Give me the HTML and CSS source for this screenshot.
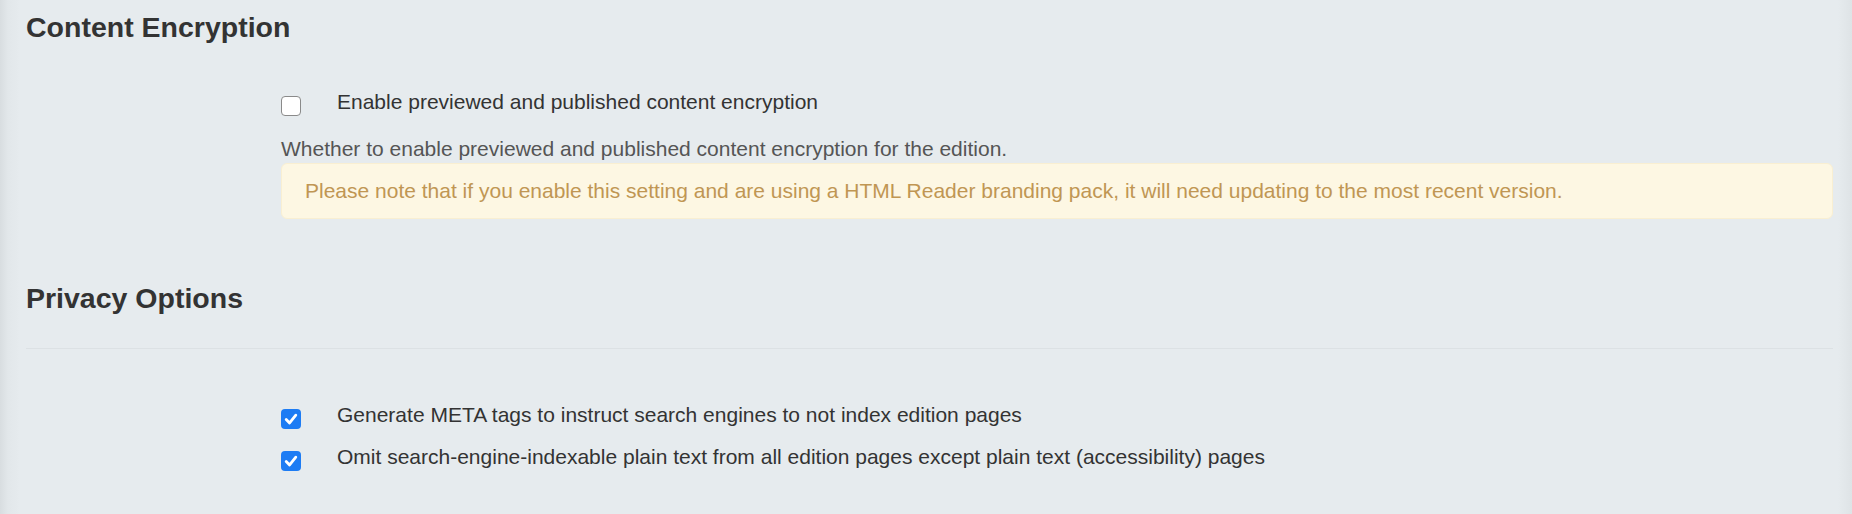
FILE: index.html
```html
<!DOCTYPE html>
<html lang="en">
<head>
<meta charset="utf-8">
<title>Edition settings</title>
<link rel="stylesheet" href="styles.css">
</head>
<body>
<div class="page">
  <section class="section section-encryption">
    <h2 class="section-title">Content Encryption</h2>
    <div class="fields">
      <label class="check-row">
        <span class="cb" role="checkbox" aria-checked="false"></span>
        <span class="check-label">Enable previewed and published content encryption</span>
      </label>
      <p class="help">Whether to enable previewed and published content encryption for the edition.</p>
      <div class="alert">Please note that if you enable this setting and are using a HTML Reader branding pack, it will need updating to the most recent version.</div>
    </div>
  </section>

  <section class="section section-privacy">
    <h2 class="section-title">Privacy Options</h2>
    <hr class="divider">
    <div class="fields fields-privacy">
      <label class="check-row">
        <span class="cb cb-on" role="checkbox" aria-checked="true"><svg viewBox="0 0 20 20" width="20" height="20"><path d="M5.2 10.4 L8.6 13.9 L14.8 6.2" fill="none" stroke="#fff" stroke-width="2.8" stroke-linecap="round" stroke-linejoin="round"/></svg></span>
        <span class="check-label">Generate META tags to instruct search engines to not index edition pages</span>
      </label>
      <label class="check-row">
        <span class="cb cb-on" role="checkbox" aria-checked="true"><svg viewBox="0 0 20 20" width="20" height="20"><path d="M5.2 10.4 L8.6 13.9 L14.8 6.2" fill="none" stroke="#fff" stroke-width="2.8" stroke-linecap="round" stroke-linejoin="round"/></svg></span>
        <span class="check-label">Omit search-engine-indexable plain text from all edition pages except plain text (accessibility) pages</span>
      </label>
    </div>
  </section>
</div>
</body>
</html>
```

FILE: styles.css
```css
html, body {
  margin: 0;
  padding: 0;
}

body {
  min-height: 514px;
  background: linear-gradient(to right, #d8dde0 0, #e2e7ea 8px, #e6ebee 20px, #e6ebee calc(100% - 14px), #dee3e6 100%);
  font-family: "Liberation Sans", Arial, Helvetica, sans-serif;
  color: #333333;
  font-size: 21px;
  line-height: 30px;
}

.page {
  padding: 0 19px 0 26px;
}

.section-title {
  margin: 0;
  font-size: 28.5px;
  line-height: 31px;
  font-weight: bold;
  color: #333333;
}

.section-encryption .section-title {
  margin-top: 12px;
}

.section-privacy .section-title {
  margin-top: 64px;
}

.fields {
  margin-left: 255px;
  padding-top: 44px;
  display: flex;
  flex-direction: column;
}

.fields-privacy {
  padding-top: 51px;
  gap: 12px;
}

.check-row {
  display: flex;
  align-items: flex-start;
  gap: 36px;
  cursor: pointer;
}

.cb {
  flex: 0 0 auto;
  box-sizing: border-box;
  width: 20px;
  height: 20px;
  margin-top: 9px;
  border: 1.5px solid #8a8a8a;
  border-radius: 4px;
  background: #ffffff;
  display: flex;
  align-items: center;
  justify-content: center;
}

.cb-on {
  border: none;
  background: #1d7cf4;
}

.cb svg {
  display: block;
}

.check-label {
  color: #333333;
}

.help {
  margin: 17px 0 0;
  color: #555555;
  line-height: 29px;
}

.alert {
  box-sizing: border-box;
  margin-top: 0;
  padding: 12px 23px;
  background: #fdf7e3;
  border: 1px solid #f9efd2;
  border-radius: 6px;
  color: #c09653;
}

.divider {
  margin: 34px 0 0;
  border: 0;
  border-top: 1px solid #dce1e4;
  height: 0;
}
```
